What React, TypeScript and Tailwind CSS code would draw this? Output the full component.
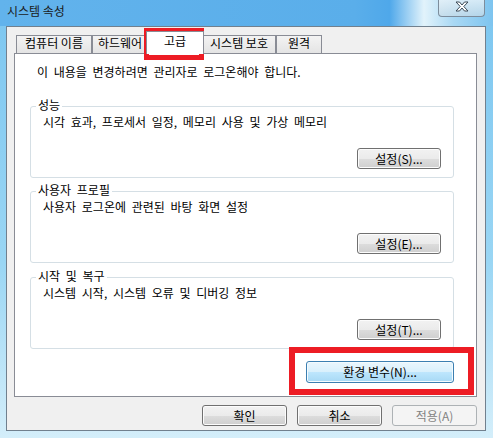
import React from 'react';

const plainBtn =
  'h-[21px] rounded-[3px] border border-[#707070] bg-[linear-gradient(#f2f2f2_0%,#ebebeb_50%,#dddddd_51%,#cfcfcf_100%)] shadow-[inset_0_0_0_1px_#fcfcfc] text-[12px] leading-[14px] text-black flex items-center justify-center';

const Tab = ({ label, w }: { label: string; w: string }) => (
  <div
    className={`${w} h-[18px] border border-b-0 border-[#898c95] bg-[linear-gradient(#f3f3f3,#e4e4e4)] text-center leading-[14px]`}
  >
    {label}
  </div>
);

const Group = ({ title, desc, button }: { title: string; desc: string; button: string }) => (
  <div className="relative ml-[15px] w-[424px] h-[72px] rounded-[3px] border border-[#d5dfe5]">
    <span className="absolute left-[5px] -top-[9px] bg-white px-[2px] leading-[14px]">{title}</span>
    <p className="pl-[12px] pt-[8px] leading-[14px]">{desc}</p>
    <div className="flex justify-end pr-[12px] mt-[19px] [word-spacing:0px]">
      <button className={`${plainBtn} w-[84px]`}>{button}</button>
    </div>
  </div>
);

export default function App() {
  return (
    <div className="relative w-[493px] h-[438px] overflow-hidden bg-[linear-gradient(180deg,#7cc6f0_0%,#9ad6f4_60%,#d4eefa_100%)] font-['Noto_Sans_CJK_KR','Noto_Sans',sans-serif] text-[12px] text-black">
      {/* title bar */}
      <div className="h-[26px] flex items-start bg-[linear-gradient(90deg,#62b3ec_0%,#5aaeea_72%,#4fa8ea_79%,#e2f3fb_86%,#a9d8f4_92%,#7dc4ef_100%)]">
        <div className="flex-1 pl-[7px] pt-[4px] leading-[14px] text-[#1a1a1a]">시스템 속성</div>
        <div className="mr-[8px] w-[47px] h-[17px] rounded-b-[4px] border border-t-0 border-[#7d8d9c] bg-[linear-gradient(#e8f2f8cc,#c9dbe6aa)] flex items-start justify-center pt-[1px]">
          <svg width="14" height="11" viewBox="-1 -1 14 11">
            <path
              d="M0,0 H3.5 L6,3 L8.5,0 H12 L7.8,4.5 L12,9 H8.5 L6,6 L3.5,9 H0 L4.2,4.5 Z"
              fill="#ffffff"
              stroke="#3c4a57"
              strokeWidth="1"
              strokeLinejoin="round"
            />
          </svg>
        </div>
      </div>

      {/* client area */}
      <div className="ml-[6px] w-[480px] h-[405px] border border-[#71808e] bg-[#f0f0f0] pl-[7px] pt-[4px]">
        {/* tabs */}
        <div className="flex items-end h-[22px] pl-[2px]">
          <Tab label="컴퓨터 이름" w="w-[76px]" />
          <Tab label="하드웨어" w="w-[56px]" />
          <div className="relative z-10 -mx-[2px] -mb-[1px] w-[58px] h-[23px] border border-b-0 border-[#898c95] bg-white text-center pt-[2px] leading-[14px]">
            고급
          </div>
          <Tab label="시스템 보호" w="w-[74px]" />
          <Tab label="원격" w="w-[46px]" />
        </div>

        {/* panel */}
        <div className="w-[463px] h-[344px] border border-[#898c95] bg-white [word-spacing:3px]">
          <p className="mt-[11px] pl-[22px] leading-[14px]">이 내용을 변경하려면 관리자로 로그온해야 합니다.</p>
          <div className="mt-[27px]">
            <Group title="성능" desc="시각 효과, 프로세서 일정, 메모리 사용 및 가상 메모리" button="설정(S)..." />
          </div>
          <div className="mt-[13px]">
            <Group title="사용자 프로필" desc="사용자 로그온에 관련된 바탕 화면 설정" button="설정(E)..." />
          </div>
          <div className="mt-[14px]">
            <Group title="시작 및 복구" desc="시스템 시작, 시스템 오류 및 디버깅 정보" button="설정(T)..." />
          </div>
          <div className="ml-[15px] w-[424px] mt-[12px] flex justify-end [word-spacing:2px]">
            <button className="w-[148px] h-[22px] rounded-[3px] border border-[#3c7fb1] bg-[linear-gradient(#eaf6fd_0%,#d9f0fc_50%,#bee6fd_51%,#a7d9f5_100%)] shadow-[inset_0_0_0_1px_#f4fbfe] leading-[14px] flex items-center justify-center">
              환경 변수(N)...
            </button>
          </div>
        </div>

        {/* dialog buttons */}
        <div className="mt-[8px] w-[463px] flex justify-end gap-[10px]">
          <button className={`${plainBtn} w-[85px]`}>확인</button>
          <button className={`${plainBtn} w-[85px]`}>취소</button>
          <button className="w-[85px] h-[21px] rounded-[3px] border border-[#adb2b5] bg-[#f4f4f4] text-[#838383] leading-[14px] flex items-center justify-center">
            적용(A)
          </button>
        </div>
      </div>

      {/* red annotation boxes */}
      <div className="absolute left-[144px] top-[28px] w-[60px] h-[32px] border-[5px] border-[#ed1c24]" />
      <div className="absolute left-[289px] top-[347px] w-[185px] h-[48px] border-[6px] border-[#ed1c24]" />
    </div>
  );
}
